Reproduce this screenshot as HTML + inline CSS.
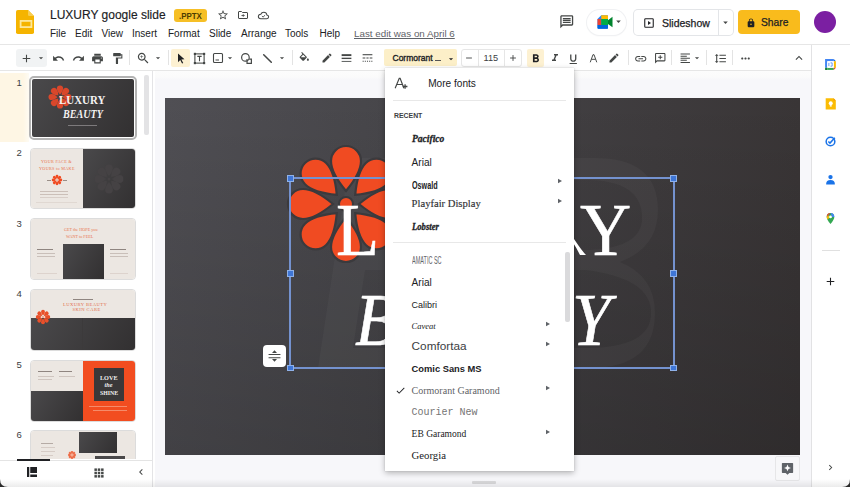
<!DOCTYPE html>
<html><head><meta charset="utf-8">
<style>
*{margin:0;padding:0;box-sizing:border-box}
html,body{width:850px;height:487px;overflow:hidden;background:#fff;font-family:"Liberation Sans",sans-serif;color:#3c4043}
.a{position:absolute}
.t{position:absolute;white-space:nowrap;line-height:1}
svg{position:absolute;overflow:visible}
.sr{font-family:"Liberation Serif",serif}
.mo{font-family:"Liberation Mono",monospace}
</style></head><body>
<svg style="left:16px;top:9.7px" width="18" height="24" viewBox="0 0 18 24">
  <path d="M1.8 0 H12 L18 6 V22.2 Q18 24 16.2 24 H1.8 Q0 24 0 22.2 V1.8 Q0 0 1.8 0Z" fill="#f5b400"/>
  <path d="M12 0 L18 6 H13.2 Q12 6 12 4.8Z" fill="#f8cd50"/>
  <rect x="4.6" y="10.9" width="10.8" height="6.2" fill="none" stroke="#fde79a" stroke-width="1.8"/>
</svg>
<div class="t" style="left:50px;top:9.4px;font-size:12px;color:#202124;-webkit-text-stroke:0.15px #202124">LUXURY google slide</div>
<div class="a" style="left:174px;top:8.6px;width:33px;height:13.6px;background:#f6bf26;border-radius:3px"></div>
<div class="t" style="left:179px;top:12.3px;font-size:8.6px;color:#4d3d00;font-weight:bold;transform:scaleX(0.92);transform-origin:0 0">.PPTX</div>
<svg style="left:216.50px;top:9.00px" width="12" height="12" viewBox="0 0 24 24"><path d="M22 9.24l-7.19-.62L12 2 9.19 8.63 2 9.24l5.46 4.73L5.82 21 12 17.27 18.18 21l-1.63-7.03L22 9.24zM12 15.4l-3.76 2.27 1-4.28-3.32-2.88 4.38-.38L12 6.1l1.71 4.04 4.38.38-3.32 2.88 1 4.28L12 15.4z" fill="#444746"/></svg>
<svg style="left:236.50px;top:9.00px" width="12" height="12" viewBox="0 0 24 24"><path d="M3 6 Q3 5 4 5 H9 L11 7 H20 Q21 7 21 8 V18 Q21 19 20 19 H4 Q3 19 3 18Z" fill="none" stroke="#444746" stroke-width="2"/><path d="M9 13 H14 M12 10.5 L14.5 13 L12 15.5" fill="none" stroke="#444746" stroke-width="1.8"/></svg>
<svg style="left:257.00px;top:8.50px" width="13" height="13" viewBox="0 0 24 24"><path d="M7 18 H18 Q21.5 18 21.5 14.5 Q21.5 11.3 18.3 11 Q17.5 6 12.5 6 Q8.5 6 7 9.6 Q2.5 10 2.5 14 Q2.5 18 7 18Z" fill="none" stroke="#444746" stroke-width="1.9"/><path d="M9 13 L11.2 15 L15 11.3" fill="none" stroke="#444746" stroke-width="1.7"/></svg>
<div class="t" style="left:50px;top:29px;font-size:10px;color:#202124">File</div>
<div class="t" style="left:75px;top:29px;font-size:10px;color:#202124">Edit</div>
<div class="t" style="left:101.5px;top:29px;font-size:10px;color:#202124">View</div>
<div class="t" style="left:132px;top:29px;font-size:10px;color:#202124">Insert</div>
<div class="t" style="left:168px;top:29px;font-size:10px;color:#202124">Format</div>
<div class="t" style="left:209px;top:29px;font-size:10px;color:#202124">Slide</div>
<div class="t" style="left:241px;top:29px;font-size:10px;color:#202124">Arrange</div>
<div class="t" style="left:285px;top:29px;font-size:10px;color:#202124">Tools</div>
<div class="t" style="left:319.5px;top:29px;font-size:10px;color:#202124">Help</div>
<div class="t" style="left:354px;top:29px;font-size:9.8px;color:#5f6368;text-decoration:underline">Last edit was on April 6</div>
<svg style="left:558.55px;top:14.05px" width="15.5" height="15.5" viewBox="0 0 24 24"><path d="M20 2H4c-1.1 0-2 .9-2 2v18l4-4h14c1.1 0 2-.9 2-2V4c0-1.1-.9-2-2-2zm0 14H5.17L4 17.17V4h16v12zM6 12h12v2H6zm0-3h12v2H6zm0-3h12v2H6z" fill="#444746"/></svg>
<div class="a" style="left:587px;top:10px;width:39px;height:25px;border-radius:13px;background:#fff;box-shadow:0 0 0 1px #f0f1f3,0 1px 2px rgba(0,0,0,0.06)"></div>
<svg style="left:595.50px;top:13.00px" width="18" height="18" viewBox="0 0 24 24"><path d="M2 8 L7 3 H15 Q16 3 16 4 V20 Q16 21 15 21 H3 Q2 21 2 20Z" fill="#2684fc"/><path d="M2 8 H7 V16 H2Z" fill="#ea4335"/><path d="M7 3 H15 Q16 3 16 4 V8 H7Z" fill="#ffba00"/><path d="M2 16 H16 V20 Q16 21 15 21 H3 Q2 21 2 20Z" fill="#0066da"/><path d="M7 8 H16 V16 H7Z" fill="#00ac47"/><path d="M16 9.5 L22 5 V19 L16 14.5Z" fill="#00832d"/><rect x="7" y="8" width="9" height="8" fill="#fff" opacity="0"/></svg>
<svg style="left:613.00px;top:16.00px" width="11" height="11" viewBox="0 0 24 24"><path d="M7 10l5 5 5-5z" fill="#444746"/></svg>
<div class="a" style="left:634px;top:10px;width:99px;height:25px;border-radius:4px;background:#fff;box-shadow:0 0 0 1px #e3e5e8"></div>
<div class="a" style="left:718px;top:10px;width:1px;height:25px;background:#e3e5e8"></div>
<svg style="left:643.00px;top:16.50px" width="12" height="12" viewBox="0 0 24 24"><rect x="3.5" y="3.5" width="17" height="17" rx="1.5" fill="none" stroke="#202124" stroke-width="2.2"/><path d="M10 8 L16 12 L10 16Z" fill="#202124"/></svg>
<div class="t" style="left:662px;top:17.5px;font-size:10.5px;color:#202124;-webkit-text-stroke:0.25px #202124">Slideshow</div>
<svg style="left:720.00px;top:17.00px" width="11" height="11" viewBox="0 0 24 24"><path d="M7 10l5 5 5-5z" fill="#444746"/></svg>
<div class="a" style="left:738px;top:10px;width:62px;height:24px;border-radius:4px;background:#f9bb1c"></div>
<svg style="left:746.00px;top:17.50px" width="10" height="10" viewBox="0 0 24 24"><path d="M18 8h-1V6c0-2.76-2.24-5-5-5S7 3.24 7 6v2H6c-1.1 0-2 .9-2 2v10c0 1.1.9 2 2 2h12c1.1 0 2-.9 2-2V10c0-1.1-.9-2-2-2zm-6 9c-1.1 0-2-.9-2-2s.9-2 2-2 2 .9 2 2-.9 2-2 2zm3.1-9H8.9V6c0-1.71 1.39-3.1 3.1-3.1 1.71 0 3.1 1.39 3.1 3.1v2z" fill="#202124"/></svg>
<div class="t" style="left:761px;top:17.5px;font-size:10.3px;color:#202124;-webkit-text-stroke:0.25px #202124">Share</div>
<div class="a" style="left:814px;top:11px;width:22px;height:22px;border-radius:50%;background:#7b1fa2"></div>
<div class="a" style="left:0px;top:44px;width:850px;height:1px;background:#e6e6e6"></div>
<div class="a" style="left:16px;top:49px;width:31px;height:17.5px;background:#f1f3f4;border-radius:3px"></div>
<svg style="left:19.50px;top:51.90px" width="13" height="13" viewBox="0 0 24 24"><path d="M19 13h-6v6h-2v-6H5v-2h6V5h2v6h6v2z" fill="#444746"/></svg>
<svg style="left:36.00px;top:53.40px" width="10" height="10" viewBox="0 0 24 24"><path d="M7 10l5 5 5-5z" fill="#444746"/></svg>
<svg style="left:51.50px;top:51.90px" width="13" height="13" viewBox="0 0 24 24"><path d="M12.5 8c-2.65 0-5.05.99-6.9 2.6L2 7v9h9l-3.62-3.62c1.39-1.16 3.16-1.88 5.12-1.88 3.54 0 6.55 2.31 7.6 5.5l2.37-.78C21.08 11.03 17.15 8 12.5 8z" fill="#444746"/></svg>
<svg style="left:71.50px;top:51.90px" width="13" height="13" viewBox="0 0 24 24"><path d="M18.4 10.6C16.55 8.99 14.15 8 11.5 8c-4.65 0-8.58 3.03-9.96 7.22L3.9 16c1.05-3.19 4.05-5.5 7.6-5.5 1.95 0 3.73.72 5.12 1.88L13 16h9V7l-3.6 3.6z" fill="#444746"/></svg>
<svg style="left:91.00px;top:51.90px" width="13" height="13" viewBox="0 0 24 24"><path d="M19 8H5c-1.66 0-3 1.34-3 3v6h4v4h12v-4h4v-6c0-1.66-1.34-3-3-3zm-3 11H8v-5h8v5zm3-7c-.55 0-1-.45-1-1s.45-1 1-1 1 .45 1 1-.45 1-1 1zm-1-9H6v4h12V3z" fill="#444746"/></svg>
<svg style="left:110.50px;top:51.90px" width="13" height="13" viewBox="0 0 24 24"><path d="M18 4V3c0-.55-.45-1-1-1H5c-.55 0-1 .45-1 1v4c0 .55.45 1 1 1h12c.55 0 1-.45 1-1V6h1v4H9v11c0 .55.45 1 1 1h2c.55 0 1-.45 1-1v-9h8V4h-3z" fill="#444746"/></svg>
<div class="a" style="left:129px;top:50px;width:1px;height:15px;background:#e3e3e3"></div>
<svg style="left:135.75px;top:51.15px" width="14.5" height="14.5" viewBox="0 0 24 24"><path d="M15.5 14h-.79l-.28-.27C15.41 12.59 16 11.11 16 9.5 16 5.91 13.09 3 9.5 3S3 5.91 3 9.5 5.91 16 9.5 16c1.61 0 3.09-.59 4.23-1.57l.27.28v.79l5 4.99L20.49 19l-4.99-5zm-6 0C7.01 14 5 11.99 5 9.5S7.01 5 9.5 5 14 7.01 14 9.5 11.99 14 9.5 14zM12 10h-2v2H9v-2H7V9h2V7h1v2h2v1z" fill="#444746"/></svg>
<svg style="left:153.00px;top:53.40px" width="10" height="10" viewBox="0 0 24 24"><path d="M7 10l5 5 5-5z" fill="#444746"/></svg>
<div class="a" style="left:168px;top:50px;width:1px;height:15px;background:#e3e3e3"></div>
<div class="a" style="left:171px;top:48.5px;width:19px;height:18.5px;background:#fdf1d2;border-radius:2px"></div>
<svg style="left:174.50px;top:52.40px" width="12" height="12" viewBox="0 0 24 24"><path d="M6 3l13 11.5-6.2.4 3.7 7-2.4 1.2-3.6-7.1L6 20.3z" fill="#202124"/></svg>
<svg style="left:193.00px;top:51.90px" width="13" height="13" viewBox="0 0 24 24"><rect x="3.5" y="3.5" width="17" height="17" fill="none" stroke="#444746" stroke-width="2"/><rect x="1.5" y="1.5" width="4" height="4" fill="#444746"/><rect x="18.5" y="1.5" width="4" height="4" fill="#444746"/><rect x="1.5" y="18.5" width="4" height="4" fill="#444746"/><rect x="18.5" y="18.5" width="4" height="4" fill="#444746"/><path d="M8 8 H16 M12 8 V17" stroke="#444746" stroke-width="2"/></svg>
<svg style="left:212.00px;top:52.40px" width="12" height="12" viewBox="0 0 24 24"><rect x="3" y="3" width="18" height="18" rx="2" fill="none" stroke="#444746" stroke-width="2.2"/><path d="M7 16 H14" stroke="#444746" stroke-width="2"/></svg>
<svg style="left:225.00px;top:53.40px" width="10" height="10" viewBox="0 0 24 24"><path d="M7 10l5 5 5-5z" fill="#444746"/></svg>
<svg style="left:240.00px;top:51.90px" width="13" height="13" viewBox="0 0 24 24"><circle cx="10" cy="10" r="7" fill="none" stroke="#444746" stroke-width="2.2"/><path d="M13 13 V21 H21 V13 H17" fill="none" stroke="#444746" stroke-width="2.2"/></svg>
<svg style="left:260.50px;top:51.90px" width="13" height="13" viewBox="0 0 24 24"><path d="M5 5 L19 19" stroke="#444746" stroke-width="2.8" stroke-linecap="round"/></svg>
<svg style="left:277.00px;top:53.40px" width="10" height="10" viewBox="0 0 24 24"><path d="M7 10l5 5 5-5z" fill="#444746"/></svg>
<div class="a" style="left:292px;top:50px;width:1px;height:15px;background:#e3e3e3"></div>
<svg style="left:298.25px;top:52.15px" width="12.5" height="12.5" viewBox="0 0 24 24"><path d="M16.56 8.94L7.62 0 6.21 1.41l2.38 2.38-5.15 5.15c-.59.59-.59 1.54 0 2.12l5.5 5.5c.29.29.68.44 1.06.44s.77-.15 1.06-.44l5.5-5.5c.59-.58.59-1.53 0-2.12zM5.21 10L10 5.21 14.79 10H5.21zM19 11.5s-2 2.17-2 3.5c0 1.1.9 2 2 2s2-.9 2-2c0-1.33-2-3.5-2-3.5z" fill="#444746"/></svg>
<svg style="left:320.70px;top:52.40px" width="12" height="12" viewBox="0 0 24 24"><path d="M3 17.25V21h3.75L17.81 9.94l-3.75-3.75L3 17.25zM20.71 7.04c.39-.39.39-1.02 0-1.41l-2.34-2.34c-.39-.39-1.02-.39-1.41 0l-1.83 1.83 3.75 3.75 1.83-1.83z" fill="#444746"/></svg>
<svg style="left:340.00px;top:51.90px" width="13" height="13" viewBox="0 0 24 24"><rect x="3" y="4" width="18" height="3.5" fill="#444746"/><rect x="3" y="10.5" width="18" height="2.5" fill="#444746"/><rect x="3" y="16.5" width="18" height="1.6" fill="#444746"/></svg>
<svg style="left:360.50px;top:51.90px" width="13" height="13" viewBox="0 0 24 24"><path d="M3 5 H21" stroke="#444746" stroke-width="2"/><path d="M3 11 H8 M10 11 H14 M16 11 H21" stroke="#444746" stroke-width="2"/><path d="M3 17 H5 M7 17 H9 M11 17 H13 M15 17 H17 M19 17 H21" stroke="#444746" stroke-width="2"/></svg>
<div class="a" style="left:384px;top:48.8px;width:72.5px;height:17.6px;background:#fcefc8;border-radius:2px"></div>
<div class="t" style="left:392.5px;top:54.1px;font-size:8.5px;color:#202124;-webkit-text-stroke:0.35px #202124">Cormorant</div>
<div class="a" style="left:434.5px;top:60.2px;width:6px;height:1px;background:#555"></div>
<svg style="left:445.50px;top:54.00px" width="10" height="10" viewBox="0 0 24 24"><path d="M7 10l5 5 5-5z" fill="#202124"/></svg>
<div class="a" style="left:460.5px;top:49px;width:61px;height:17.5px;border:1px solid #e6e6e6;border-radius:3px"></div>
<div class="a" style="left:477.5px;top:49px;width:1px;height:17.5px;background:#e6e6e6"></div>
<div class="a" style="left:504px;top:49px;width:1px;height:17.5px;background:#e6e6e6"></div>
<svg style="left:464.00px;top:53.40px" width="10" height="10" viewBox="0 0 24 24"><path d="M5 12 H19" stroke="#444746" stroke-width="2.2"/></svg>
<div class="t" style="left:483.5px;top:53.5px;font-size:9.2px;color:#3c4043">115</div>
<svg style="left:507.50px;top:53.40px" width="10" height="10" viewBox="0 0 24 24"><path d="M5 12 H19 M12 5 V19" stroke="#444746" stroke-width="2.2"/></svg>
<div class="a" style="left:527px;top:48.5px;width:17px;height:18.5px;background:#fdf1d2;border-radius:2px"></div>
<svg style="left:528.55px;top:51.65px" width="13.5" height="13.5" viewBox="0 0 24 24"><path d="M15.6 10.79c.97-.67 1.65-1.77 1.65-2.79 0-2.26-1.75-4-4-4H7v14h7.04c2.09 0 3.71-1.7 3.71-3.79 0-1.52-.86-2.82-2.1-3.42zM10 6.5h3c.83 0 1.5.67 1.5 1.5s-.67 1.5-1.5 1.5h-3v-3zm3.5 9H10v-3h3.5c.83 0 1.5.67 1.5 1.5s-.67 1.5-1.5 1.5z" fill="#202124"/></svg>
<svg style="left:548.60px;top:52.40px" width="12" height="12" viewBox="0 0 24 24"><path d="M10 4v3h2.21l-3.42 8H6v3h8v-3h-2.21l3.42-8H18V4z" fill="#444746"/></svg>
<svg style="left:567.25px;top:52.65px" width="12.5" height="12.5" viewBox="0 0 24 24"><path d="M12 17c3.31 0 6-2.69 6-6V3h-2.5v8c0 1.93-1.57 3.5-3.5 3.5S8.5 12.93 8.5 11V3H6v8c0 3.31 2.69 6 6 6zm-7 2v2h14v-2H5z" fill="#444746"/></svg>
<svg style="left:586.80px;top:51.90px" width="13" height="13" viewBox="0 0 24 24"><path d="M6 19 L11 5 H13 L18 19 M8.2 13.5 H15.8" fill="none" stroke="#444746" stroke-width="1.8"/></svg>
<svg style="left:608.00px;top:52.40px" width="12" height="12" viewBox="0 0 24 24"><path d="M3 17.25V21h3.75L17.81 9.94l-3.75-3.75L3 17.25zM20.71 7.04c.39-.39.39-1.02 0-1.41l-2.34-2.34c-.39-.39-1.02-.39-1.41 0l-1.83 1.83 3.75 3.75 1.83-1.83z" fill="#444746"/></svg>
<div class="a" style="left:628px;top:50px;width:1px;height:15px;background:#e3e3e3"></div>
<svg style="left:633.85px;top:51.65px" width="13.5" height="13.5" viewBox="0 0 24 24"><path d="M3.9 12c0-1.71 1.39-3.1 3.1-3.1h4V7H7c-2.76 0-5 2.24-5 5s2.24 5 5 5h4v-1.9H7c-1.71 0-3.1-1.39-3.1-3.1zM8 13h8v-2H8v2zm9-6h-4v1.9h4c1.71 0 3.1 1.39 3.1 3.1s-1.39 3.1-3.1 3.1h-4V17h4c2.76 0 5-2.24 5-5s-2.24-5-5-5z" fill="#444746"/></svg>
<svg style="left:654.05px;top:52.15px" width="12.5" height="12.5" viewBox="0 0 24 24"><path d="M20 2H4c-1.1 0-2 .9-2 2v18l4-4h14c1.1 0 2-.9 2-2V4c0-1.1-.9-2-2-2zm0 14H5.17L4 17.17V4h16v12zM11 14h2v-3h3V9h-3V6h-2v3H8v2h3z" fill="#444746"/></svg>
<div class="a" style="left:670.5px;top:50px;width:1px;height:15px;background:#e3e3e3"></div>
<svg style="left:678.75px;top:52.15px" width="12.5" height="12.5" viewBox="0 0 24 24"><path d="M15 15H3v2h12v-2zm0-8H3v2h12V7zM3 13h18v-2H3v2zm0 8h18v-2H3v2zM3 3v2h18V3H3z" fill="#444746"/></svg>
<svg style="left:692.00px;top:53.40px" width="10" height="10" viewBox="0 0 24 24"><path d="M7 10l5 5 5-5z" fill="#444746"/></svg>
<div class="a" style="left:706px;top:50px;width:1px;height:15px;background:#e3e3e3"></div>
<svg style="left:713.50px;top:51.90px" width="13" height="13" viewBox="0 0 24 24"><path d="M6 7h2.5L5 3.5 1.5 7H4v10H1.5L5 20.5 8.5 17H6V7zm4-2v2h12V5H10zm0 14h12v-2H10v2zm0-6h12v-2H10v2z" fill="#444746"/></svg>
<div class="a" style="left:732px;top:50px;width:1px;height:15px;background:#e3e3e3"></div>
<svg style="left:739.00px;top:51.90px" width="13" height="13" viewBox="0 0 24 24"><path d="M6 10c-1.1 0-2 .9-2 2s.9 2 2 2 2-.9 2-2-.9-2-2-2zm12 0c-1.1 0-2 .9-2 2s.9 2 2 2 2-.9 2-2-.9-2-2-2zm-6 0c-1.1 0-2 .9-2 2s.9 2 2 2 2-.9 2-2-.9-2-2-2z" fill="#444746"/></svg>
<svg style="left:791.50px;top:51.40px" width="14" height="14" viewBox="0 0 24 24"><path d="M12 8l-6 6 1.41 1.41L12 10.83l4.59 4.58L18 14z" fill="#444746"/></svg>
<div class="a" style="left:0px;top:70px;width:811px;height:1px;background:#e6e6e6"></div>
<div class="a" style="left:154px;top:71px;width:657px;height:416px;background:#f7f7fa"></div>
<div class="a" style="left:154px;top:71px;width:657px;height:9px;background:linear-gradient(#fcfcfc 0%,#fbfbfb 60%,#f7f7fa 100%)"></div>
<div class="a" style="left:152px;top:71px;width:1px;height:416px;background:#e4e4e6"></div>
<div class="a" style="left:153px;top:71px;width:2px;height:416px;background:#fff"></div>
<div class="a" style="left:165px;top:98.3px;width:635px;height:356.6px;background:linear-gradient(to bottom,rgba(0,0,0,0) 0%,rgba(0,0,0,0.18) 100%),linear-gradient(to right,#504f54 0%,#47464a 35%,#393536 100%);overflow:hidden"><svg style="left:0;top:0" width="635" height="356" viewBox="0 0 635 356"><path d="M185 60 H430 Q493 60 493 112 Q493 150 455 164 Q490 178 490 215 Q490 270 425 270 H153 Z M215 82 H420 Q477 82 477 120 Q477 152 415 152 H203 Z M200 172 H420 Q486 180 486 215 Q486 250 420 250 H188 Z" fill="#ffffff" fill-rule="evenodd" opacity="0.03"/></svg></div>
<svg style="left:346px;top:203.5px" width="1" height="1" viewBox="0 0 1 1"><path d="M0,-13 C-5,-19 -15,-32 -15,-43 A15,15 0 0 1 15,-43 C15,-32 5,-19 0,-13Z" transform="rotate(0)" fill="#f04b22" stroke="#3b3a3d" stroke-width="2.2"/><path d="M0,-13 C-5,-19 -15,-32 -15,-43 A15,15 0 0 1 15,-43 C15,-32 5,-19 0,-13Z" transform="rotate(45)" fill="#f04b22" stroke="#3b3a3d" stroke-width="2.2"/><path d="M0,-13 C-5,-19 -15,-32 -15,-43 A15,15 0 0 1 15,-43 C15,-32 5,-19 0,-13Z" transform="rotate(90)" fill="#f04b22" stroke="#3b3a3d" stroke-width="2.2"/><path d="M0,-13 C-5,-19 -15,-32 -15,-43 A15,15 0 0 1 15,-43 C15,-32 5,-19 0,-13Z" transform="rotate(135)" fill="#f04b22" stroke="#3b3a3d" stroke-width="2.2"/><path d="M0,-13 C-5,-19 -15,-32 -15,-43 A15,15 0 0 1 15,-43 C15,-32 5,-19 0,-13Z" transform="rotate(180)" fill="#f04b22" stroke="#3b3a3d" stroke-width="2.2"/><path d="M0,-13 C-5,-19 -15,-32 -15,-43 A15,15 0 0 1 15,-43 C15,-32 5,-19 0,-13Z" transform="rotate(225)" fill="#f04b22" stroke="#3b3a3d" stroke-width="2.2"/><path d="M0,-13 C-5,-19 -15,-32 -15,-43 A15,15 0 0 1 15,-43 C15,-32 5,-19 0,-13Z" transform="rotate(270)" fill="#f04b22" stroke="#3b3a3d" stroke-width="2.2"/><path d="M0,-13 C-5,-19 -15,-32 -15,-43 A15,15 0 0 1 15,-43 C15,-32 5,-19 0,-13Z" transform="rotate(315)" fill="#f04b22" stroke="#3b3a3d" stroke-width="2.2"/><circle r="7" fill="#f04b22" stroke="#3b3a3d" stroke-width="2"/></svg>
<div class="t" style="left:0px;top:0px;font-size:73px;font-family:'Liberation Serif';color:#fff;-webkit-text-stroke:0.5px #fff;left:335.6px;top:193.9px;transform:scaleX(0.97);transform-origin:0 0">L</div>
<div class="t" style="left:0px;top:0px;font-size:73px;font-family:'Liberation Serif';color:#fff;-webkit-text-stroke:0.5px #fff;left:580.2px;top:193.9px;transform:scaleX(0.97);transform-origin:0 0">Y</div>
<div class="t" style="left:0px;top:0px;font-size:73px;font-family:'Liberation Serif';font-style:italic;color:#fff;-webkit-text-stroke:0.6px #fff;left:354.5px;top:284px;transform:scaleX(0.95);transform-origin:0 0">B</div>
<div class="t" style="left:0px;top:0px;font-size:73px;font-family:'Liberation Serif';font-style:italic;color:#fff;-webkit-text-stroke:0.6px #fff;left:572px;top:284px;transform:scaleX(0.95);transform-origin:0 0">Y</div>
<div class="a" style="left:289.3px;top:177.3px;width:385.4px;height:192.20000000000002px;border:2.4px solid #7492cf"></div>
<div class="a" style="left:287.3px;top:175.3px;width:6.4px;height:6.4px;background:#3f76d6;border:1px solid #8fb1e8"></div>
<div class="a" style="left:670.3px;top:175.3px;width:6.4px;height:6.4px;background:#3f76d6;border:1px solid #8fb1e8"></div>
<div class="a" style="left:287.3px;top:365.1px;width:6.4px;height:6.4px;background:#3f76d6;border:1px solid #8fb1e8"></div>
<div class="a" style="left:670.3px;top:365.1px;width:6.4px;height:6.4px;background:#3f76d6;border:1px solid #8fb1e8"></div>
<div class="a" style="left:287.3px;top:270.2px;width:6.4px;height:6.4px;background:#3f76d6;border:1px solid #8fb1e8"></div>
<div class="a" style="left:670.3px;top:270.2px;width:6.4px;height:6.4px;background:#3f76d6;border:1px solid #8fb1e8"></div>
<div class="a" style="left:263px;top:344.7px;width:22.6px;height:22.3px;background:#fff;border-radius:4px"></div>
<svg style="left:266.80px;top:348.30px" width="15" height="15" viewBox="0 0 24 24"><path d="M12 3.4 L16 7.8 H8Z M12 21.8 L16 17.6 H8Z" fill="#444746"/><path d="M2.5 10.4 H21.5 M2.5 15.6 H21.5" stroke="#444746" stroke-width="1.7"/></svg>
<div class="a" style="left:774.5px;top:455.5px;width:25px;height:25px;background:#f7f7f9;border:1px solid #e6e6e8;border-radius:2px"></div>
<svg style="left:779.50px;top:461.30px" width="15" height="15" viewBox="0 0 24 24"><path d="M4 3 H20 Q21 3 21 4 V18 Q21 19 20 19 H15 L12 22 L9 19 H4 Q3 19 3 18 V4 Q3 3 4 3Z" fill="#5f6368"/><path d="M12 5.5 L13.6 9.4 L17.5 11 L13.6 12.6 L12 16.5 L10.4 12.6 L6.5 11 L10.4 9.4Z" fill="#fff"/></svg>
<div class="a" style="left:472px;top:481px;width:24px;height:3px;background:#d9d9db;border-radius:1px"></div>
<div class="a" style="left:811px;top:45px;width:39px;height:442px;background:#fff"></div>
<div class="a" style="left:811px;top:45px;width:1px;height:442px;background:#e2e2e4"></div>
<svg style="left:824.00px;top:57.70px" width="13" height="13" viewBox="0 0 24 24"><rect x="2" y="2" width="20" height="20" rx="1" fill="#fff"/><path d="M2 2 H18 V6 H6 V18 H2Z" fill="#4285f4"/><path d="M18 2 L22 6 H18Z" fill="#1967d2"/><path d="M22 6 V18 H18 V6Z" fill="#fbbc04"/><path d="M6 18 H18 V22 H6Z" fill="#34a853"/><path d="M2 18 H6 V22 H3 Q2 22 2 21Z" fill="#188038"/><path d="M18 18 H22 L18 22Z" fill="#ea4335"/><rect x="6" y="6" width="12" height="12" fill="#fff"/><path d="M9 9 V15 M12 9 H15 V15 H12" stroke="#4285f4" stroke-width="1.5" fill="none"/></svg>
<svg style="left:823.75px;top:96.55px" width="13.5" height="13.5" viewBox="0 0 24 24"><path d="M3 2 H17 L21 6 V22 H3Z" fill="#fbbc04"/><path d="M17 2 L21 6 H17Z" fill="#f29900"/><circle cx="12" cy="11" r="3.5" fill="#fff"/><rect x="10.3" y="14.5" width="3.4" height="2.5" fill="#fff"/></svg>
<svg style="left:824.00px;top:135.00px" width="13" height="13" viewBox="0 0 24 24"><circle cx="12" cy="12" r="8" fill="none" stroke="#1a73e8" stroke-width="2.8"/><path d="M8 12 L11 15 L20 5" fill="none" stroke="#1a73e8" stroke-width="2.8"/><circle cx="12" cy="12" r="4" fill="#fff" opacity="0"/></svg>
<svg style="left:824.00px;top:172.80px" width="13" height="13" viewBox="0 0 24 24"><circle cx="12" cy="7.5" r="4" fill="#1a73e8"/><path d="M4 20 Q4 13 12 13 Q20 13 20 20 V21 H4Z" fill="#1a73e8"/></svg>
<svg style="left:824.00px;top:211.50px" width="13" height="13" viewBox="0 0 24 24"><path d="M12 2 Q19 2 19 9 Q19 14 12 22 Q5 14 5 9 Q5 2 12 2Z" fill="#34a853"/><path d="M12 2 Q19 2 19 9 L15 9 Z" fill="#4285f4"/><path d="M5 9 Q5 2 12 2 L8 6Z" fill="#ea4335"/><path d="M5 9 L8 6 L10 10 L7 14 Q5 11 5 9Z" fill="#fbbc04"/><circle cx="12" cy="9" r="2.6" fill="#fff"/></svg>
<div class="a" style="left:822px;top:249.5px;width:18px;height:1px;background:#e0e0e0"></div>
<svg style="left:824.00px;top:274.50px" width="13" height="13" viewBox="0 0 24 24"><path d="M19 13h-6v6h-2v-6H5v-2h6V5h2v6h6v2z" fill="#202124"/></svg>
<svg style="left:824.50px;top:461.50px" width="11" height="11" viewBox="0 0 24 24"><path d="M10 6L8.59 7.41 13.17 12l-4.58 4.59L10 18l6-6z" fill="#444746"/></svg>
<div class="a" style="left:0px;top:71px;width:152px;height:388px;background:#fff"></div>
<div class="a" style="left:0px;top:72.5px;width:29px;height:69.5px;background:linear-gradient(to right,#fef6e4 0%,#fef6e4 80%,#fefbf3 100%)"></div>
<div class="t" style="left:16.5px;top:77.5px;font-size:9.5px;color:#3c4043">1</div>
<div class="t" style="left:16.5px;top:148.0px;font-size:9.5px;color:#3c4043">2</div>
<div class="t" style="left:16.5px;top:218.5px;font-size:9.5px;color:#3c4043">3</div>
<div class="t" style="left:16.5px;top:289.0px;font-size:9.5px;color:#3c4043">4</div>
<div class="t" style="left:16.5px;top:359.5px;font-size:9.5px;color:#3c4043">5</div>
<div class="t" style="left:16.5px;top:430.0px;font-size:9.5px;color:#3c4043">6</div>
<div class="a" style="left:144px;top:75px;width:5px;height:60px;background:#e3e3e5;border-radius:2px"></div>
<div class="a" style="left:385px;top:68px;width:189px;height:403px;background:#fff;box-shadow:0 2px 6px rgba(0,0,0,0.28),0 0 1px rgba(0,0,0,0.2)"></div>
<svg style="left:393.50px;top:76.00px" width="14" height="14" viewBox="0 0 24 24"><path d="M2 21 L9 4 H10.5 L17 21 M5 14.5 H14.5" fill="none" stroke="#444746" stroke-width="2"/><path d="M15 18 H23 M19 14 V22" stroke="#444746" stroke-width="2.2"/></svg>
<div class="t" style="left:428.2px;top:78.85px;font-size:10.1px;font-family:'Liberation Sans',sans-serif;color:#202124">More fonts</div>
<div class="a" style="left:393px;top:99.5px;width:173px;height:1px;background:#e8e8e8"></div>
<div class="t" style="left:394px;top:113.46px;font-size:6.9px;font-family:'Liberation Sans',sans-serif;color:#3c4043;font-weight:bold">RECENT</div>
<div class="t" style="left:411.6px;top:134.32px;font-size:10.6px;font-family:'Liberation Serif',serif;color:#202124;font-weight:bold;font-style:italic;transform:scaleX(0.9);transform-origin:0 0;-webkit-text-stroke:0.3px #202124">Pacifico</div>
<div class="t" style="left:411.6px;top:157.65px;font-size:10.1px;font-family:'Liberation Sans',sans-serif;color:#202124">Arial</div>
<div class="t" style="left:411.6px;top:179.79px;font-size:11px;font-family:'Liberation Sans',sans-serif;color:#202124;font-weight:bold;transform:scaleX(0.655);transform-origin:0 0">Oswald</div>
<div class="t" style="left:411.6px;top:199.22px;font-size:10.6px;font-family:'Liberation Serif',serif;color:#303134;-webkit-text-stroke:0.15px #303134">Playfair Display</div>
<div class="t" style="left:411.6px;top:222.06px;font-size:9.6px;font-family:'Liberation Serif',serif;color:#202124;font-weight:bold;font-style:italic;transform:scaleX(0.9);transform-origin:0 0;-webkit-text-stroke:0.3px #202124">Lobster</div>
<div class="a" style="left:393px;top:242px;width:173px;height:1px;background:#e8e8e8"></div>
<div class="t" style="left:411.6px;top:255.53px;font-size:10px;font-family:'Liberation Sans',sans-serif;color:#5f6368;transform:scaleX(0.551);transform-origin:0 0">AMATIC SC</div>
<div class="t" style="left:411.6px;top:277.65px;font-size:10.1px;font-family:'Liberation Sans',sans-serif;color:#202124">Arial</div>
<div class="t" style="left:411.6px;top:300.68px;font-size:9.0px;font-family:'Liberation Sans',sans-serif;color:#202124">Calibri</div>
<div class="t" style="left:411.6px;top:322.18px;font-size:8.5px;font-family:'Liberation Serif',serif;color:#202124;font-style:italic">Caveat</div>
<div class="t" style="left:411.6px;top:340.23px;font-size:11.78px;font-family:'Liberation Sans',sans-serif;color:#3c4043">Comfortaa</div>
<div class="t" style="left:411.6px;top:364.90px;font-size:9.33px;font-family:'Liberation Sans',sans-serif;color:#202124;font-weight:bold">Comic Sans MS</div>
<div class="t" style="left:411.6px;top:386.12px;font-size:10px;font-family:'Liberation Serif',serif;color:#5f6368">Cormorant Garamond</div>
<div class="t" style="left:411.6px;top:408.23px;font-size:10px;font-family:'Liberation Mono',monospace;color:#757575">Courier New</div>
<div class="t" style="left:411.6px;top:429.63px;font-size:9.52px;font-family:'Liberation Serif',serif;color:#202124">EB Garamond</div>
<div class="t" style="left:411.6px;top:450.01px;font-size:10.74px;font-family:'Liberation Serif',serif;color:#202124">Georgia</div>
<svg style="left:394.80px;top:385.20px" width="11" height="11" viewBox="0 0 24 24"><path d="M9 16.17L4.83 12l-1.42 1.41L9 19 21 7l-1.41-1.41z" fill="#202124"/></svg>
<svg style="left:556.60px;top:177.70px" width="6" height="6" viewBox="0 0 24 24"><path d="M4 3 L20 12 L4 21Z" fill="#5f6368"/></svg>
<svg style="left:556.60px;top:198.00px" width="6" height="6" viewBox="0 0 24 24"><path d="M4 3 L20 12 L4 21Z" fill="#5f6368"/></svg>
<svg style="left:545.00px;top:320.60px" width="6" height="6" viewBox="0 0 24 24"><path d="M4 3 L20 12 L4 21Z" fill="#5f6368"/></svg>
<svg style="left:545.00px;top:340.90px" width="6" height="6" viewBox="0 0 24 24"><path d="M4 3 L20 12 L4 21Z" fill="#5f6368"/></svg>
<svg style="left:545.00px;top:385.00px" width="6" height="6" viewBox="0 0 24 24"><path d="M4 3 L20 12 L4 21Z" fill="#5f6368"/></svg>
<svg style="left:545.00px;top:428.60px" width="6" height="6" viewBox="0 0 24 24"><path d="M4 3 L20 12 L4 21Z" fill="#5f6368"/></svg>
<div class="a" style="left:565px;top:252.3px;width:5px;height:70.2px;background:#dadadc;border-radius:2px"></div>
<svg style="left:570.00px;top:239.00px" width="16" height="16" viewBox="-8 -8 16 16"><path d="M-4 -8 Q4 4 8 8 H2 Q-2 0 -6 -6Z" fill="#fff"/></svg>
<div class="a" style="left:29px;top:76px;width:108px;height:64px;border:2px solid #b3b3b3;border-radius:5px;background:#fff"></div>
<div class="a" style="left:32px;top:79px;width:102px;height:58px;border-radius:2px;overflow:hidden"><div class="a" style="left:0px;top:0px;width:102px;height:58px;background:linear-gradient(120deg,#4a494b,#323031)"></div><svg style="left:27.5px;top:17.5px;transform:scale(1.2);transform-origin:0 0" width="1" height="1" viewBox="0 0 1 1"><path d="M0,-2 C-1,-3 -2.6,-5 -2.6,-7 A2.6,2.6 0 0 1 2.6,-7 C2.6,-5 1,-3 0,-2Z" transform="rotate(0)" fill="#d9472b"/><path d="M0,-2 C-1,-3 -2.6,-5 -2.6,-7 A2.6,2.6 0 0 1 2.6,-7 C2.6,-5 1,-3 0,-2Z" transform="rotate(45)" fill="#d9472b"/><path d="M0,-2 C-1,-3 -2.6,-5 -2.6,-7 A2.6,2.6 0 0 1 2.6,-7 C2.6,-5 1,-3 0,-2Z" transform="rotate(90)" fill="#d9472b"/><path d="M0,-2 C-1,-3 -2.6,-5 -2.6,-7 A2.6,2.6 0 0 1 2.6,-7 C2.6,-5 1,-3 0,-2Z" transform="rotate(135)" fill="#d9472b"/><path d="M0,-2 C-1,-3 -2.6,-5 -2.6,-7 A2.6,2.6 0 0 1 2.6,-7 C2.6,-5 1,-3 0,-2Z" transform="rotate(180)" fill="#d9472b"/><path d="M0,-2 C-1,-3 -2.6,-5 -2.6,-7 A2.6,2.6 0 0 1 2.6,-7 C2.6,-5 1,-3 0,-2Z" transform="rotate(225)" fill="#d9472b"/><path d="M0,-2 C-1,-3 -2.6,-5 -2.6,-7 A2.6,2.6 0 0 1 2.6,-7 C2.6,-5 1,-3 0,-2Z" transform="rotate(270)" fill="#d9472b"/><path d="M0,-2 C-1,-3 -2.6,-5 -2.6,-7 A2.6,2.6 0 0 1 2.6,-7 C2.6,-5 1,-3 0,-2Z" transform="rotate(315)" fill="#d9472b"/><circle r="1" fill="#d9472b"/></svg><div class="t" style="left:26.5px;top:15px;font-size:12.3px;font-family:'Liberation Serif';font-weight:bold;color:#f4f2f2;transform:scaleX(0.89);transform-origin:0 0">LUXURY</div><div class="t" style="left:31px;top:30px;font-size:11.5px;font-family:'Liberation Serif';font-weight:bold;font-style:italic;color:#f4f2f2;transform:scaleX(0.88);transform-origin:0 0">BEAUTY</div><div class="a" style="left:36px;top:46px;width:29px;height:1px;background:#7d7a7c"></div></div>
<div class="a" style="left:30px;top:147.5px;width:106px;height:61.5px;border:1px solid #dcdcdc;border-radius:4px;background:#fff"></div>
<div class="a" style="left:31px;top:148.5px;width:104px;height:59.5px;border-radius:3px;overflow:hidden"><div class="a" style="left:0px;top:0px;width:104px;height:60px;background:#ece7e2"></div><div class="a" style="left:52px;top:0px;width:52px;height:60px;background:linear-gradient(120deg,#4a494b,#323031)"></div><div class="t" style="left:10px;top:11px;font-size:4.2px;font-family:'Liberation Serif';color:#e9744f;letter-spacing:0.3px">YOUR FACE &amp;</div><div class="t" style="left:8px;top:18px;font-size:4.2px;font-family:'Liberation Serif';color:#e9744f;letter-spacing:0.3px">YOURS to MAKE</div><svg style="left:26px;top:31.5px;transform:scale(0.55);transform-origin:0 0" width="1" height="1" viewBox="0 0 1 1"><path d="M0,-2 C-1,-3 -2.6,-5 -2.6,-7 A2.6,2.6 0 0 1 2.6,-7 C2.6,-5 1,-3 0,-2Z" transform="rotate(0)" fill="#f04b22"/><path d="M0,-2 C-1,-3 -2.6,-5 -2.6,-7 A2.6,2.6 0 0 1 2.6,-7 C2.6,-5 1,-3 0,-2Z" transform="rotate(45)" fill="#f04b22"/><path d="M0,-2 C-1,-3 -2.6,-5 -2.6,-7 A2.6,2.6 0 0 1 2.6,-7 C2.6,-5 1,-3 0,-2Z" transform="rotate(90)" fill="#f04b22"/><path d="M0,-2 C-1,-3 -2.6,-5 -2.6,-7 A2.6,2.6 0 0 1 2.6,-7 C2.6,-5 1,-3 0,-2Z" transform="rotate(135)" fill="#f04b22"/><path d="M0,-2 C-1,-3 -2.6,-5 -2.6,-7 A2.6,2.6 0 0 1 2.6,-7 C2.6,-5 1,-3 0,-2Z" transform="rotate(180)" fill="#f04b22"/><path d="M0,-2 C-1,-3 -2.6,-5 -2.6,-7 A2.6,2.6 0 0 1 2.6,-7 C2.6,-5 1,-3 0,-2Z" transform="rotate(225)" fill="#f04b22"/><path d="M0,-2 C-1,-3 -2.6,-5 -2.6,-7 A2.6,2.6 0 0 1 2.6,-7 C2.6,-5 1,-3 0,-2Z" transform="rotate(270)" fill="#f04b22"/><path d="M0,-2 C-1,-3 -2.6,-5 -2.6,-7 A2.6,2.6 0 0 1 2.6,-7 C2.6,-5 1,-3 0,-2Z" transform="rotate(315)" fill="#f04b22"/><circle r="1" fill="#f04b22"/></svg><div class="a" style="left:16px;top:31px;width:4px;height:1px;background:#9a8f88"></div><div class="a" style="left:32px;top:31px;width:4px;height:1px;background:#9a8f88"></div><div class="a" style="left:9px;top:42px;width:28px;height:1px;background:#cbbfb8"></div><div class="a" style="left:9px;top:45px;width:28px;height:1px;background:#cbbfb8"></div><div class="a" style="left:9px;top:48px;width:28px;height:1px;background:#d8ceC8"></div><div class="a" style="left:5px;top:53px;width:41px;height:1px;background:#e0d8d2"></div><svg style="left:78px;top:30px;transform:scale(1.5);transform-origin:0 0" width="1" height="1" viewBox="0 0 1 1"><path d="M0,-2 C-1,-3 -2.6,-5 -2.6,-7 A2.6,2.6 0 0 1 2.6,-7 C2.6,-5 1,-3 0,-2Z" transform="rotate(0)" fill="#454244"/><path d="M0,-2 C-1,-3 -2.6,-5 -2.6,-7 A2.6,2.6 0 0 1 2.6,-7 C2.6,-5 1,-3 0,-2Z" transform="rotate(45)" fill="#454244"/><path d="M0,-2 C-1,-3 -2.6,-5 -2.6,-7 A2.6,2.6 0 0 1 2.6,-7 C2.6,-5 1,-3 0,-2Z" transform="rotate(90)" fill="#454244"/><path d="M0,-2 C-1,-3 -2.6,-5 -2.6,-7 A2.6,2.6 0 0 1 2.6,-7 C2.6,-5 1,-3 0,-2Z" transform="rotate(135)" fill="#454244"/><path d="M0,-2 C-1,-3 -2.6,-5 -2.6,-7 A2.6,2.6 0 0 1 2.6,-7 C2.6,-5 1,-3 0,-2Z" transform="rotate(180)" fill="#454244"/><path d="M0,-2 C-1,-3 -2.6,-5 -2.6,-7 A2.6,2.6 0 0 1 2.6,-7 C2.6,-5 1,-3 0,-2Z" transform="rotate(225)" fill="#454244"/><path d="M0,-2 C-1,-3 -2.6,-5 -2.6,-7 A2.6,2.6 0 0 1 2.6,-7 C2.6,-5 1,-3 0,-2Z" transform="rotate(270)" fill="#454244"/><path d="M0,-2 C-1,-3 -2.6,-5 -2.6,-7 A2.6,2.6 0 0 1 2.6,-7 C2.6,-5 1,-3 0,-2Z" transform="rotate(315)" fill="#454244"/><circle r="1" fill="#454244"/></svg></div>
<div class="a" style="left:30px;top:218px;width:106px;height:61.5px;border:1px solid #dcdcdc;border-radius:4px;background:#fff"></div>
<div class="a" style="left:31px;top:219px;width:104px;height:59.5px;border-radius:3px;overflow:hidden"><div class="a" style="left:0px;top:0px;width:104px;height:60px;background:#ece7e2"></div><div class="a" style="left:32px;top:25px;width:41px;height:35px;background:linear-gradient(120deg,#4a494b,#323031)"></div><div class="t" style="left:33px;top:9px;font-size:4.2px;font-family:'Liberation Serif';color:#e9744f">GET the HOPE you</div><div class="t" style="left:35px;top:16px;font-size:4.2px;font-family:'Liberation Serif';color:#e9744f">WANT to FEEL</div><div class="a" style="left:6px;top:30px;width:16px;height:1px;background:#8f8580"></div><div class="a" style="left:6px;top:34px;width:18px;height:1px;background:#c9bfb9"></div><div class="a" style="left:6px;top:37px;width:18px;height:1px;background:#c9bfb9"></div><div class="a" style="left:79px;top:30px;width:16px;height:1px;background:#8f8580"></div><div class="a" style="left:79px;top:34px;width:18px;height:1px;background:#c9bfb9"></div><div class="a" style="left:79px;top:37px;width:18px;height:1px;background:#c9bfb9"></div><div class="a" style="left:6px;top:54px;width:20px;height:1px;background:#ddd3cd"></div><div class="a" style="left:79px;top:54px;width:18px;height:1px;background:#ddd3cd"></div></div>
<div class="a" style="left:30px;top:289px;width:106px;height:61.5px;border:1px solid #dcdcdc;border-radius:4px;background:#fff"></div>
<div class="a" style="left:31px;top:290px;width:104px;height:59.5px;border-radius:3px;overflow:hidden"><div class="a" style="left:0px;top:0px;width:104px;height:60px;background:#ece7e2"></div><div class="a" style="left:0px;top:28px;width:104px;height:32px;background:linear-gradient(120deg,#4a494b,#323031)"></div><div class="a" style="left:51px;top:28px;width:1px;height:32px;background:#3c3a3b"></div><div class="a" style="left:42px;top:9.2px;width:20px;height:1px;background:#8f8580"></div><div class="t" style="left:32px;top:12.8px;font-size:4.6px;font-family:'Liberation Serif';color:#e26f4d;letter-spacing:0.45px">LUXURY BEAUTY</div><div class="t" style="left:41.5px;top:18.2px;font-size:4.6px;font-family:'Liberation Serif';color:#e26f4d;letter-spacing:0.45px">SKIN CARE</div><svg style="left:12px;top:26.5px;transform:scale(0.75);transform-origin:0 0" width="1" height="1" viewBox="0 0 1 1"><path d="M0,-2 C-1,-3 -2.6,-5 -2.6,-7 A2.6,2.6 0 0 1 2.6,-7 C2.6,-5 1,-3 0,-2Z" transform="rotate(0)" fill="#e9502a"/><path d="M0,-2 C-1,-3 -2.6,-5 -2.6,-7 A2.6,2.6 0 0 1 2.6,-7 C2.6,-5 1,-3 0,-2Z" transform="rotate(45)" fill="#e9502a"/><path d="M0,-2 C-1,-3 -2.6,-5 -2.6,-7 A2.6,2.6 0 0 1 2.6,-7 C2.6,-5 1,-3 0,-2Z" transform="rotate(90)" fill="#e9502a"/><path d="M0,-2 C-1,-3 -2.6,-5 -2.6,-7 A2.6,2.6 0 0 1 2.6,-7 C2.6,-5 1,-3 0,-2Z" transform="rotate(135)" fill="#e9502a"/><path d="M0,-2 C-1,-3 -2.6,-5 -2.6,-7 A2.6,2.6 0 0 1 2.6,-7 C2.6,-5 1,-3 0,-2Z" transform="rotate(180)" fill="#e9502a"/><path d="M0,-2 C-1,-3 -2.6,-5 -2.6,-7 A2.6,2.6 0 0 1 2.6,-7 C2.6,-5 1,-3 0,-2Z" transform="rotate(225)" fill="#e9502a"/><path d="M0,-2 C-1,-3 -2.6,-5 -2.6,-7 A2.6,2.6 0 0 1 2.6,-7 C2.6,-5 1,-3 0,-2Z" transform="rotate(270)" fill="#e9502a"/><path d="M0,-2 C-1,-3 -2.6,-5 -2.6,-7 A2.6,2.6 0 0 1 2.6,-7 C2.6,-5 1,-3 0,-2Z" transform="rotate(315)" fill="#e9502a"/><circle r="1" fill="#e9502a"/></svg></div>
<div class="a" style="left:30px;top:360px;width:106px;height:61.5px;border:1px solid #dcdcdc;border-radius:4px;background:#fff"></div>
<div class="a" style="left:31px;top:361px;width:104px;height:59.5px;border-radius:3px;overflow:hidden"><div class="a" style="left:0px;top:0px;width:52px;height:60px;background:#ece7e2"></div><div class="a" style="left:0px;top:30px;width:52px;height:30px;background:linear-gradient(120deg,#4a494b,#323031)"></div><div class="a" style="left:52px;top:0px;width:52px;height:60px;background:#f24d20"></div><div class="a" style="left:62.5px;top:7px;width:30.5px;height:32.6px;background:#3a3839"></div><div class="t" style="left:69.3px;top:13.8px;font-size:6.5px;font-family:'Liberation Serif';font-weight:bold;color:#f0eeee;transform:scaleX(0.95);transform-origin:0 0">LOVE</div><div class="t" style="left:73.5px;top:20.5px;font-size:6.2px;font-family:'Liberation Serif';font-style:italic;font-weight:bold;color:#f0eeee">the</div><div class="t" style="left:68.7px;top:29px;font-size:6.5px;font-family:'Liberation Serif';font-weight:bold;color:#f0eeee;transform:scaleX(0.9);transform-origin:0 0">SHINE</div><div class="a" style="left:7px;top:10px;width:14px;height:1px;background:#8f8580"></div><div class="a" style="left:28px;top:10px;width:13px;height:1px;background:#8f8580"></div><div class="a" style="left:7px;top:15px;width:16px;height:1px;background:#cfc5bf"></div><div class="a" style="left:28px;top:15px;width:16px;height:1px;background:#cfc5bf"></div><div class="a" style="left:7px;top:18px;width:14px;height:1px;background:#cfc5bf"></div><div class="a" style="left:58px;top:45px;width:38px;height:1px;background:#f58b6a"></div><div class="a" style="left:62px;top:49px;width:34px;height:1px;background:#f58b6a"></div></div>
<div class="a" style="left:30px;top:430px;width:106px;height:61.5px;border:1px solid #dcdcdc;border-radius:4px;background:#fff"></div>
<div class="a" style="left:31px;top:431px;width:104px;height:59.5px;border-radius:3px;overflow:hidden"><div class="a" style="left:0px;top:0px;width:104px;height:60px;background:#ece7e2"></div><div class="a" style="left:48px;top:1px;width:37.5px;height:20.5px;background:linear-gradient(120deg,#4a494b,#323031)"></div><div class="a" style="left:10px;top:12px;width:12px;height:1px;background:#b5aba5"></div><div class="a" style="left:10px;top:16px;width:14px;height:1px;background:#d6ccc6"></div><div class="a" style="left:10px;top:20px;width:14px;height:1px;background:#d6ccc6"></div><div class="a" style="left:10px;top:24px;width:12px;height:1px;background:#d6ccc6"></div><div class="a" style="left:37px;top:20px;width:8px;height:8px;border-radius:50%;background:#f7c7b5"></div><svg style="left:41px;top:24px;transform:scale(0.42);transform-origin:0 0" width="1" height="1" viewBox="0 0 1 1"><path d="M0,-2 C-1,-3 -2.6,-5 -2.6,-7 A2.6,2.6 0 0 1 2.6,-7 C2.6,-5 1,-3 0,-2Z" transform="rotate(0)" fill="#ec6a45"/><path d="M0,-2 C-1,-3 -2.6,-5 -2.6,-7 A2.6,2.6 0 0 1 2.6,-7 C2.6,-5 1,-3 0,-2Z" transform="rotate(45)" fill="#ec6a45"/><path d="M0,-2 C-1,-3 -2.6,-5 -2.6,-7 A2.6,2.6 0 0 1 2.6,-7 C2.6,-5 1,-3 0,-2Z" transform="rotate(90)" fill="#ec6a45"/><path d="M0,-2 C-1,-3 -2.6,-5 -2.6,-7 A2.6,2.6 0 0 1 2.6,-7 C2.6,-5 1,-3 0,-2Z" transform="rotate(135)" fill="#ec6a45"/><path d="M0,-2 C-1,-3 -2.6,-5 -2.6,-7 A2.6,2.6 0 0 1 2.6,-7 C2.6,-5 1,-3 0,-2Z" transform="rotate(180)" fill="#ec6a45"/><path d="M0,-2 C-1,-3 -2.6,-5 -2.6,-7 A2.6,2.6 0 0 1 2.6,-7 C2.6,-5 1,-3 0,-2Z" transform="rotate(225)" fill="#ec6a45"/><path d="M0,-2 C-1,-3 -2.6,-5 -2.6,-7 A2.6,2.6 0 0 1 2.6,-7 C2.6,-5 1,-3 0,-2Z" transform="rotate(270)" fill="#ec6a45"/><path d="M0,-2 C-1,-3 -2.6,-5 -2.6,-7 A2.6,2.6 0 0 1 2.6,-7 C2.6,-5 1,-3 0,-2Z" transform="rotate(315)" fill="#ec6a45"/><circle r="1" fill="#ec6a45"/></svg><div class="a" style="left:64px;top:25px;width:30px;height:3px;background:#4a4849"></div></div>
<div class="a" style="left:0px;top:459px;width:152px;height:28px;background:#fff"></div>
<div class="a" style="left:0px;top:459.5px;width:152px;height:1px;background:#e4e4e4"></div>
<div class="a" style="left:17px;top:458.5px;width:33px;height:2px;background:#202124"></div>
<svg style="left:26.00px;top:466.30px" width="12" height="12" viewBox="0 0 24 24"><rect x="2" y="2" width="4.5" height="20" fill="#202124"/><rect x="8.5" y="2" width="13.5" height="12" fill="#202124"/><rect x="8.5" y="17" width="13.5" height="5" fill="#202124"/></svg>
<svg style="left:93.90px;top:467.50px" width="10" height="10" viewBox="0 0 24 24"><rect x="1" y="1" width="6" height="6" fill="#444746"/><rect x="9" y="1" width="6" height="6" fill="#444746"/><rect x="17" y="1" width="6" height="6" fill="#444746"/><rect x="1" y="9" width="6" height="6" fill="#444746"/><rect x="9" y="9" width="6" height="6" fill="#444746"/><rect x="17" y="9" width="6" height="6" fill="#444746"/><rect x="1" y="17" width="6" height="6" fill="#444746"/><rect x="9" y="17" width="6" height="6" fill="#444746"/><rect x="17" y="17" width="6" height="6" fill="#444746"/></svg>
<svg style="left:135.00px;top:466.00px" width="12" height="12" viewBox="0 0 24 24"><path d="M15.41 7.41L14 6l-6 6 6 6 1.41-1.41L10.83 12z" fill="#444746"/></svg>
<div class="a" style="left:0px;top:479px;width:850px;height:8px;background:linear-gradient(rgba(0,0,0,0),rgba(0,0,0,0.08))"></div>
<svg style="left:0;top:479px" width="8" height="8" viewBox="0 0 8 8"><path d="M0 0 Q0 8 8 8 H0Z" fill="#2a2a2a"/></svg>
<svg style="left:842px;top:479px" width="8" height="8" viewBox="0 0 8 8"><path d="M8 0 Q8 8 0 8 H8Z" fill="#2a2a2a"/></svg>
</body></html>
